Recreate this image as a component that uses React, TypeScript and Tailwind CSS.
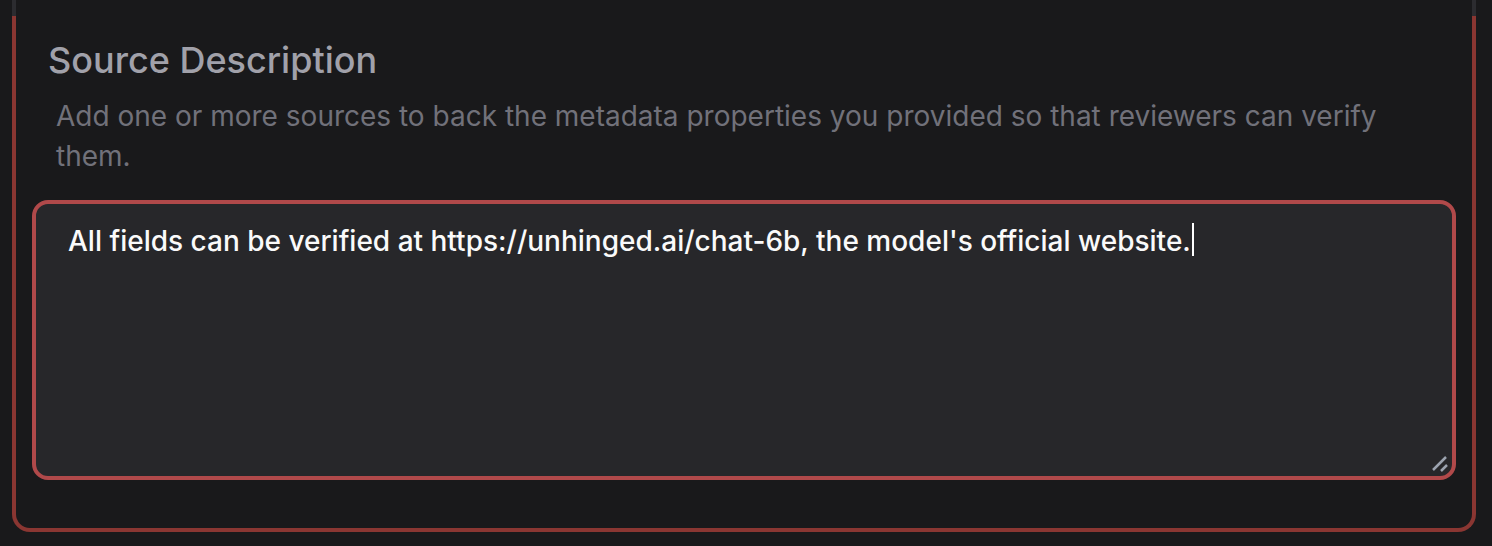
export default function App() {
  return (
    <div className="min-h-screen bg-[#19191b] pl-3 pr-4 font-['Inter','Liberation_Sans',sans-serif]">
      <div className="h-4 border-x-4 border-[#2c2c30]" />

      <div className="rounded-b-[18px] border-4 border-t-0 border-[#8a3632] px-4 pb-12">
        <h2 className="pl-4 pt-4 text-[36px] leading-[56px] font-medium text-[#a1a1aa]">
          Source Description
        </h2>
        <p className="mt-2 pl-6 pr-6 text-[28px] leading-[40px] text-[#71717a]">
          Add one or more sources to back the metadata properties you provided so that reviewers can verify
          them.
        </p>

        <div className="relative mt-6 h-[280px] rounded-[16px] border-4 border-[#b0494a] bg-[#27272a] px-8 pt-[14px]">
          <p className="text-[28px] leading-[40px] font-medium text-[#fafafa]">
            All fields can be verified at https://unhinged.ai/chat-6b, the model's official website.
            <span className="ml-[1px] inline-block h-[33px] w-[2px] translate-y-[5px] bg-white align-baseline" />
          </p>
          <svg
            className="absolute bottom-[3px] right-[3px]"
            width="18"
            height="18"
            viewBox="0 0 18 18"
          >
            <path d="M2 15 L15 2" stroke="#9ca3af" strokeWidth="2.5" />
            <path d="M10 16 L16 10" stroke="#9ca3af" strokeWidth="2.5" />
          </svg>
        </div>
      </div>
    </div>
  )
}
